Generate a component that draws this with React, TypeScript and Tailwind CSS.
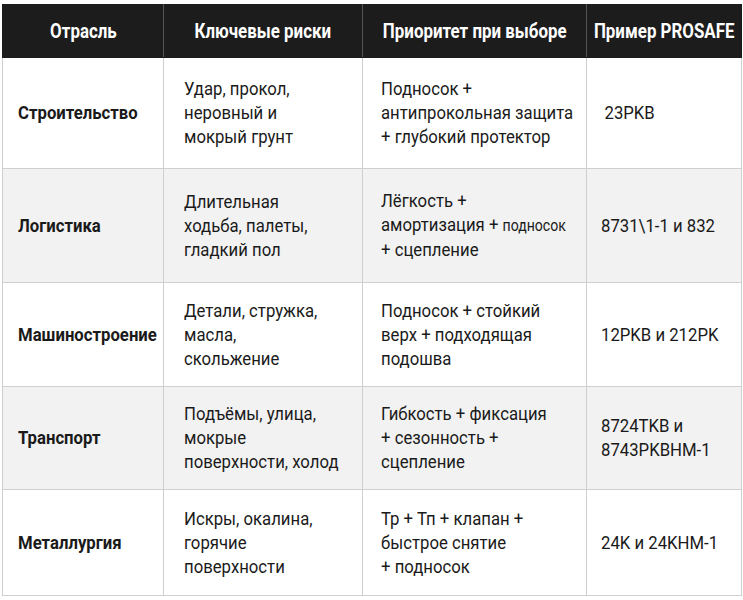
import React from "react";

const font = { fontFamily: 'Roboto, "Liberation Sans", sans-serif' };

function T({ children }: { children: React.ReactNode }) {
  return <span className="inline-block origin-left scale-x-[0.88] whitespace-nowrap">{children}</span>;
}
function H({ children }: { children: React.ReactNode }) {
  return (
    <div className="flex justify-center">
      <span className="shrink-0 origin-center scale-x-[0.845] whitespace-nowrap">{children}</span>
    </div>
  );
}

type Row = { h: string; a: React.ReactNode; b: React.ReactNode; c: React.ReactNode; gray: boolean; height: string };

const rows: Row[] = [
  {
    h: "Строительство",
    a: <>Удар, прокол,<br />неровный и<br />мокрый грунт</>,
    b: <>Подносок +<br />антипрокольная защита<br />+ глубокий протектор</>,
    c: <span className="pl-1">23PKB</span>,
    gray: false,
    height: "h-[111px]",
  },
  {
    h: "Логистика",
    a: <>Длительная<br />ходьба, палеты,<br />гладкий пол</>,
    b: <>Лёгкость +<br />амортизация + <span className="text-[16px]">подносок</span><br />+ сцепление</>,
    c: <>8731\1-1 и 832</>,
    gray: true,
    height: "h-[114px]",
  },
  {
    h: "Машиностроение",
    a: <>Детали, стружка,<br />масла,<br />скольжение</>,
    b: <>Подносок + стойкий<br />верх + подходящая<br />подошва</>,
    c: <>12PKB и 212PK</>,
    gray: false,
    height: "h-[104px]",
  },
  {
    h: "Транспорт",
    a: <>Подъёмы, улица,<br />мокрые<br />поверхности, холод</>,
    b: <>Гибкость + фиксация<br />+ сезонность +<br />сцепление</>,
    c: <>8724TKB и<br />8743PKBHM-1</>,
    gray: true,
    height: "h-[103px]",
  },
  {
    h: "Металлургия",
    a: <>Искры, окалина,<br />горячие<br />поверхности</>,
    b: <>Тр + Тп + клапан +<br />быстрое снятие<br />+ подносок</>,
    c: <>24K и 24KHM-1</>,
    gray: false,
    height: "h-[106px]",
  },
];

export default function App() {
  return (
    <div className="w-[743px] h-[600px] bg-white pt-[4px] pl-[2px]" style={font}>
      <table className="border-collapse table-fixed w-[739px] text-[#1a1a1a]">
        <colgroup>
          <col className="w-[161px]" />
          <col className="w-[199px]" />
          <col className="w-[224px]" />
          <col className="w-[155px]" />
        </colgroup>
        <thead>
          <tr className="h-[53px] bg-[#1c1c1c] text-white text-[20px] font-bold">
            <th className="border border-[#1c1c1c] border-r-[#555] p-0"><H>Отрасль</H></th>
            <th className="border border-[#1c1c1c] border-r-[#555] p-0"><H>Ключевые риски</H></th>
            <th className="border border-[#1c1c1c] border-r-[#555] p-0"><H>Приоритет при выборе</H></th>
            <th className="border border-[#1c1c1c] p-0"><H>Пример PROSAFE</H></th>
          </tr>
        </thead>
        <tbody className="text-[19px] leading-[24px]">
          {rows.map((r, i) => (
            <tr key={i} className={`${r.height} ${r.gray ? "bg-[#f2f2f2]" : "bg-white"}`}>
              <td className="border border-[#cfcfcf] pl-[15px] font-bold align-middle"><T>{r.h}</T></td>
              <td className="border border-[#cfcfcf] pl-[20px] align-middle"><T>{r.a}</T></td>
              <td className="border border-[#cfcfcf] pl-[18px] align-middle"><T>{r.b}</T></td>
              <td className="border border-[#cfcfcf] pl-[14px] align-middle"><T>{r.c}</T></td>
            </tr>
          ))}
        </tbody>
      </table>
    </div>
  );
}
